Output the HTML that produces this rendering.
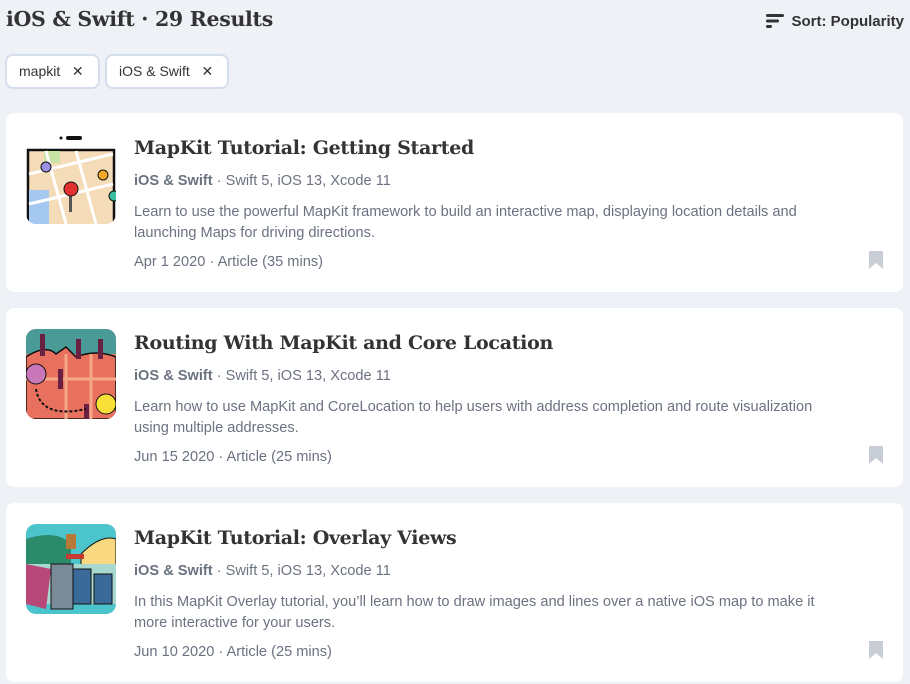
<!DOCTYPE html>
<html><head><style>
body{margin:0;width:910px;height:684px;overflow:hidden;background:#eef1f6;font-family:"Liberation Sans",sans-serif;position:relative}
.h1{position:absolute;left:6px;top:7px;font-family:"DejaVu Serif",serif;font-weight:bold;font-size:20.5px;color:#333;letter-spacing:-0.3px}
.sort{position:absolute;right:6px;top:13px;font-size:15px;font-weight:bold;color:#333}
.sort svg{vertical-align:-3px;margin-right:6px}
.chip{position:absolute;top:54px;height:35px;border:2px solid #d5deec;border-radius:8px;background:#fff;box-sizing:border-box;font-size:14px;color:#333;line-height:31px;padding:0 12px}
.card{position:absolute;left:6px;width:897px;height:179px;background:#fff;border-radius:8px}
.thumb{position:absolute;left:20px;top:21px;width:90px;height:90px;border-radius:10px;overflow:hidden}
.t{position:absolute;left:128px;top:24px;font-family:"DejaVu Serif",serif;font-weight:bold;font-size:19px;color:#333;letter-spacing:-0.3px}
.m{position:absolute;left:128px;top:60px;font-size:14.6px;color:#6b7280}
.m b{color:#6b7280}
.d{position:absolute;left:128px;top:89px;font-size:14.6px;line-height:21px;color:#6b7280;width:715px}
.dt{position:absolute;left:128px;top:141px;font-size:14.6px;color:#6b7280}
.bm{position:absolute;left:862px;top:137px}
</style></head><body>
<div class="h1">iOS &amp; Swift · 29 Results</div>
<div class="sort"><svg width="20" height="16"><rect x="1" y="1" width="18" height="3" rx="1.5" fill="#333"/><rect x="1" y="6.5" width="13" height="3" rx="1.5" fill="#333"/><rect x="1" y="12" width="6" height="3" rx="1.5" fill="#333"/></svg>Sort: Popularity</div>
<div class="chip" style="left:5px;width:95px">mapkit &nbsp;&nbsp;✕</div>
<div class="chip" style="left:105px;width:124px">iOS &amp; Swift &nbsp;&nbsp;✕</div>

<div class="card" style="top:113px">
<div class="thumb" style="background:#fff"><svg width="90" height="90"><circle cx="35" cy="4" r="1.5" fill="#111"/><rect x="40" y="2" width="16" height="4" rx="2" fill="#111"/><rect x="2" y="16" width="86" height="80" fill="#f4dcb8" stroke="#111" stroke-width="2.5"/><rect x="3" y="56" width="20" height="34" fill="#a4c8f0"/><rect x="18" y="17" width="16" height="12" fill="#c8e3a4"/><g stroke="#fff" stroke-width="3"><line x1="3" y1="40" x2="87" y2="20"/><line x1="3" y1="70" x2="87" y2="50"/><line x1="20" y1="17" x2="40" y2="90"/><line x1="50" y1="17" x2="70" y2="90"/></g><circle cx="20" cy="33" r="5" fill="#9b92e8" stroke="#111"/><circle cx="77" cy="41" r="5" fill="#f4a828" stroke="#111"/><circle cx="88" cy="62" r="5" fill="#3cbfa0" stroke="#111"/><rect x="43" y="60" width="3" height="18" fill="#555"/><circle cx="45" cy="55" r="7" fill="#e53030" stroke="#111"/></svg></div>
<div class="t">MapKit Tutorial: Getting Started</div>
<div class="m"><b>iOS &amp; Swift</b> · Swift 5, iOS 13, Xcode 11</div>
<div class="d">Learn to use the powerful MapKit framework to build an interactive map, displaying location details and launching Maps for driving directions.</div>
<div class="dt">Apr 1 2020 · Article (35 mins)</div>
<svg class="bm" width="16" height="20"><path d="M1 1H15V19L8 13L1 19Z" fill="#c9ced6"/></svg>
</div>

<div class="card" style="top:308px">
<div class="thumb" style="background:#e8705e"><svg width="90" height="90"><rect width="90" height="25" fill="#4a9a98"/><path d="M0 28 Q20 15 30 25 L40 18 L50 28 Q70 20 90 28 V90 H0Z" fill="#e8705e" stroke="#111" stroke-width="1.5"/><g stroke="#f4a888" stroke-width="3"><line x1="0" y1="50" x2="90" y2="50"/><line x1="40" y1="25" x2="40" y2="90"/><line x1="65" y1="25" x2="65" y2="90"/></g><circle cx="10" cy="45" r="10" fill="#c878b8" stroke="#111"/><circle cx="80" cy="75" r="10" fill="#f8e038" stroke="#111"/><g fill="#6a2040"><rect x="14" y="5" width="5" height="22"/><rect x="50" y="10" width="5" height="20"/><rect x="72" y="10" width="5" height="20"/><rect x="32" y="40" width="5" height="20"/><rect x="58" y="75" width="5" height="15"/></g><path d="M10 60 Q15 90 60 80" fill="none" stroke="#111" stroke-dasharray="3 2" stroke-width="2"/></svg></div>
<div class="t">Routing With MapKit and Core Location</div>
<div class="m"><b>iOS &amp; Swift</b> · Swift 5, iOS 13, Xcode 11</div>
<div class="d">Learn how to use MapKit and CoreLocation to help users with address completion and route visualization using multiple addresses.</div>
<div class="dt">Jun 15 2020 · Article (25 mins)</div>
<svg class="bm" width="16" height="20"><path d="M1 1H15V19L8 13L1 19Z" fill="#c9ced6"/></svg>
</div>

<div class="card" style="top:503px">
<div class="thumb" style="background:#4cc4cc"><svg width="90" height="90"><path d="M0 15 Q30 5 45 20 V45 H0Z" fill="#2a8a6a"/><path d="M55 30 Q75 10 90 15 V70 H55Z" fill="#f8d880" stroke="#111"/><rect x="0" y="40" width="90" height="40" fill="#a8d8d0"/><path d="M0 40 L25 45 L20 85 L0 80Z" fill="#b84878"/><rect x="25" y="40" width="22" height="45" fill="#7a8a98" stroke="#111"/><rect x="47" y="45" width="18" height="35" fill="#3a6a98" stroke="#111"/><rect x="68" y="50" width="18" height="30" fill="#3a6a98" stroke="#111"/><rect x="40" y="10" width="10" height="15" fill="#b87838"/><rect x="40" y="30" width="18" height="5" fill="#c83830"/></svg></div>
<div class="t">MapKit Tutorial: Overlay Views</div>
<div class="m"><b>iOS &amp; Swift</b> · Swift 5, iOS 13, Xcode 11</div>
<div class="d">In this MapKit Overlay tutorial, you’ll learn how to draw images and lines over a native iOS map to make it more interactive for your users.</div>
<div class="dt">Jun 10 2020 · Article (25 mins)</div>
<svg class="bm" width="16" height="20"><path d="M1 1H15V19L8 13L1 19Z" fill="#c9ced6"/></svg>
</div>
</body></html>
